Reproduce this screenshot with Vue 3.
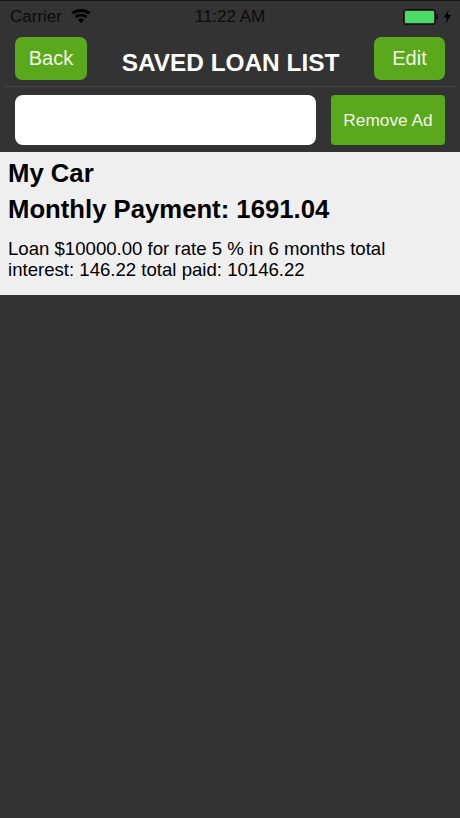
<script setup>
const title = 'SAVED LOAN LIST'
</script>

<template>
  <div class="screen">
    <div class="status">
      <div class="status-left">
        <span class="carrier">Carrier</span>
        <svg class="wifi" width="20" height="15" viewBox="0 0 20 15">
          <path d="M10 14.2 L6.9 10.6 C8.7 9.1 11.3 9.1 13.1 10.6 Z" fill="#000" />
          <path d="M5.5 9 L3.7 6.9 C7.3 3.9 12.7 3.9 16.3 6.9 L14.5 9 C11.9 6.9 8.100 6.900 5.500 9 Z" fill="#000" />
          <path d="M2.5 5.500 L0.500 3.300 C5.900 -1.100 14.100 -1.100 19.500 3.300 L17.500 5.500 C13.100 2 6.900 2 2.500 5.500 Z" fill="#000" />
        </svg>
      </div>
      <span class="time">11:22 AM</span>
      <div class="status-right">
        <div class="battery"><div class="battery-fill"></div></div>
        <div class="battery-cap"></div>
        <svg class="bolt" width="9" height="15" viewBox="0 0 9 14">
          <path d="M5.800 0 L0.800 8 L4 8 L2.800 14 L8.200 5.500 L4.800 5.500 Z" fill="#000" />
        </svg>
      </div>
    </div>
    <div class="nav">
      <button class="btn nav-btn">Back</button>
      <h1 class="title">{{ title }}</h1>
      <button class="btn nav-btn edit">Edit</button>
    </div>
    <div class="ad-row">
      <div class="ad"></div>
      <button class="btn remove">Remove Ad</button>
    </div>
    <div class="item">
      <div class="name">My Car</div>
      <div class="payment">Monthly Payment: 1691.04</div>
      <p class="detail">Loan $10000.00 for rate 5 % in 6 months total interest: 146.22 total paid: 10146.22</p>
    </div>
  </div>
</template>

<style scoped>
.screen {
  width: 460px;
  height: 818px;
  background: #333333;
  font-family: "Liberation Sans", Arial, sans-serif;
  overflow: hidden;
  display: flex;
  flex-direction: column;
}
.status {
  height: 32px;
  box-sizing: border-box;
  padding: 0 8px 0 10px;
  border-top: 1px solid #111111;
  display: flex;
  align-items: center;
  position: relative;
}
.status-left {
  display: flex;
  align-items: center;
  gap: 9px;
  flex: 1;
}
.carrier,
.time {
  font-size: 17px;
  color: #0c0c0c;
}
.time {
  position: absolute;
  left: 0;
  right: 0;
  text-align: center;
}
.wifi {
  display: block;
}
.status-right {
  display: flex;
  align-items: center;
}
.battery {
  width: 33px;
  height: 16px;
  box-sizing: border-box;
  border: 1px solid #111;
  border-radius: 3px;
  padding: 1px;
}
.battery-fill {
  width: 100%;
  height: 100%;
  background: #4cd964;
  border-radius: 1px;
}
.battery-cap {
  width: 2px;
  height: 5px;
  background: #111;
  margin-right: 5px;
}
.bolt {
  display: block;
}
.nav {
  height: 55px;
  box-sizing: border-box;
  padding: 5px 11px 0;
  margin: 0 4px;
  display: flex;
  align-items: flex-start;
  justify-content: space-between;
  border-bottom: 1px solid #444444;
}
.btn {
  border: none;
  background: #5aa81c;
  color: #f2f8e8;
  font-family: "Liberation Sans", Arial, sans-serif;
  padding: 0;
}
.nav-btn {
  width: 72px;
  height: 43px;
  border-radius: 7px;
  font-size: 20px;
}
.edit {
  width: 71px;
}
.title {
  margin: 12px 0 0;
  font-size: 24.4px;
  line-height: 28px;
  font-weight: 700;
  color: #ffffff;
  white-space: nowrap;
}
.ad-row {
  height: 65px;
  box-sizing: border-box;
  padding: 8px 15px 0;
  display: flex;
  justify-content: space-between;
  align-items: flex-start;
}
.ad {
  width: 301px;
  height: 50px;
  background: #ffffff;
  border-radius: 8px;
}
.remove {
  width: 114px;
  height: 50px;
  border-radius: 4px;
  font-size: 17.3px;
}
.item {
  height: 143px;
  box-sizing: border-box;
  background: #efefef;
  padding: 5px 8px 0;
  color: #000;
}
.name {
  font-size: 25.7px;
  line-height: 32px;
  font-weight: 700;
}
.payment {
  margin-top: 4px;
  font-size: 25.7px;
  line-height: 32px;
  font-weight: 700;
}
.detail {
  margin: 13px 0 0;
  max-width: 400px;
  font-size: 18.6px;
  line-height: 21px;
}
</style>
